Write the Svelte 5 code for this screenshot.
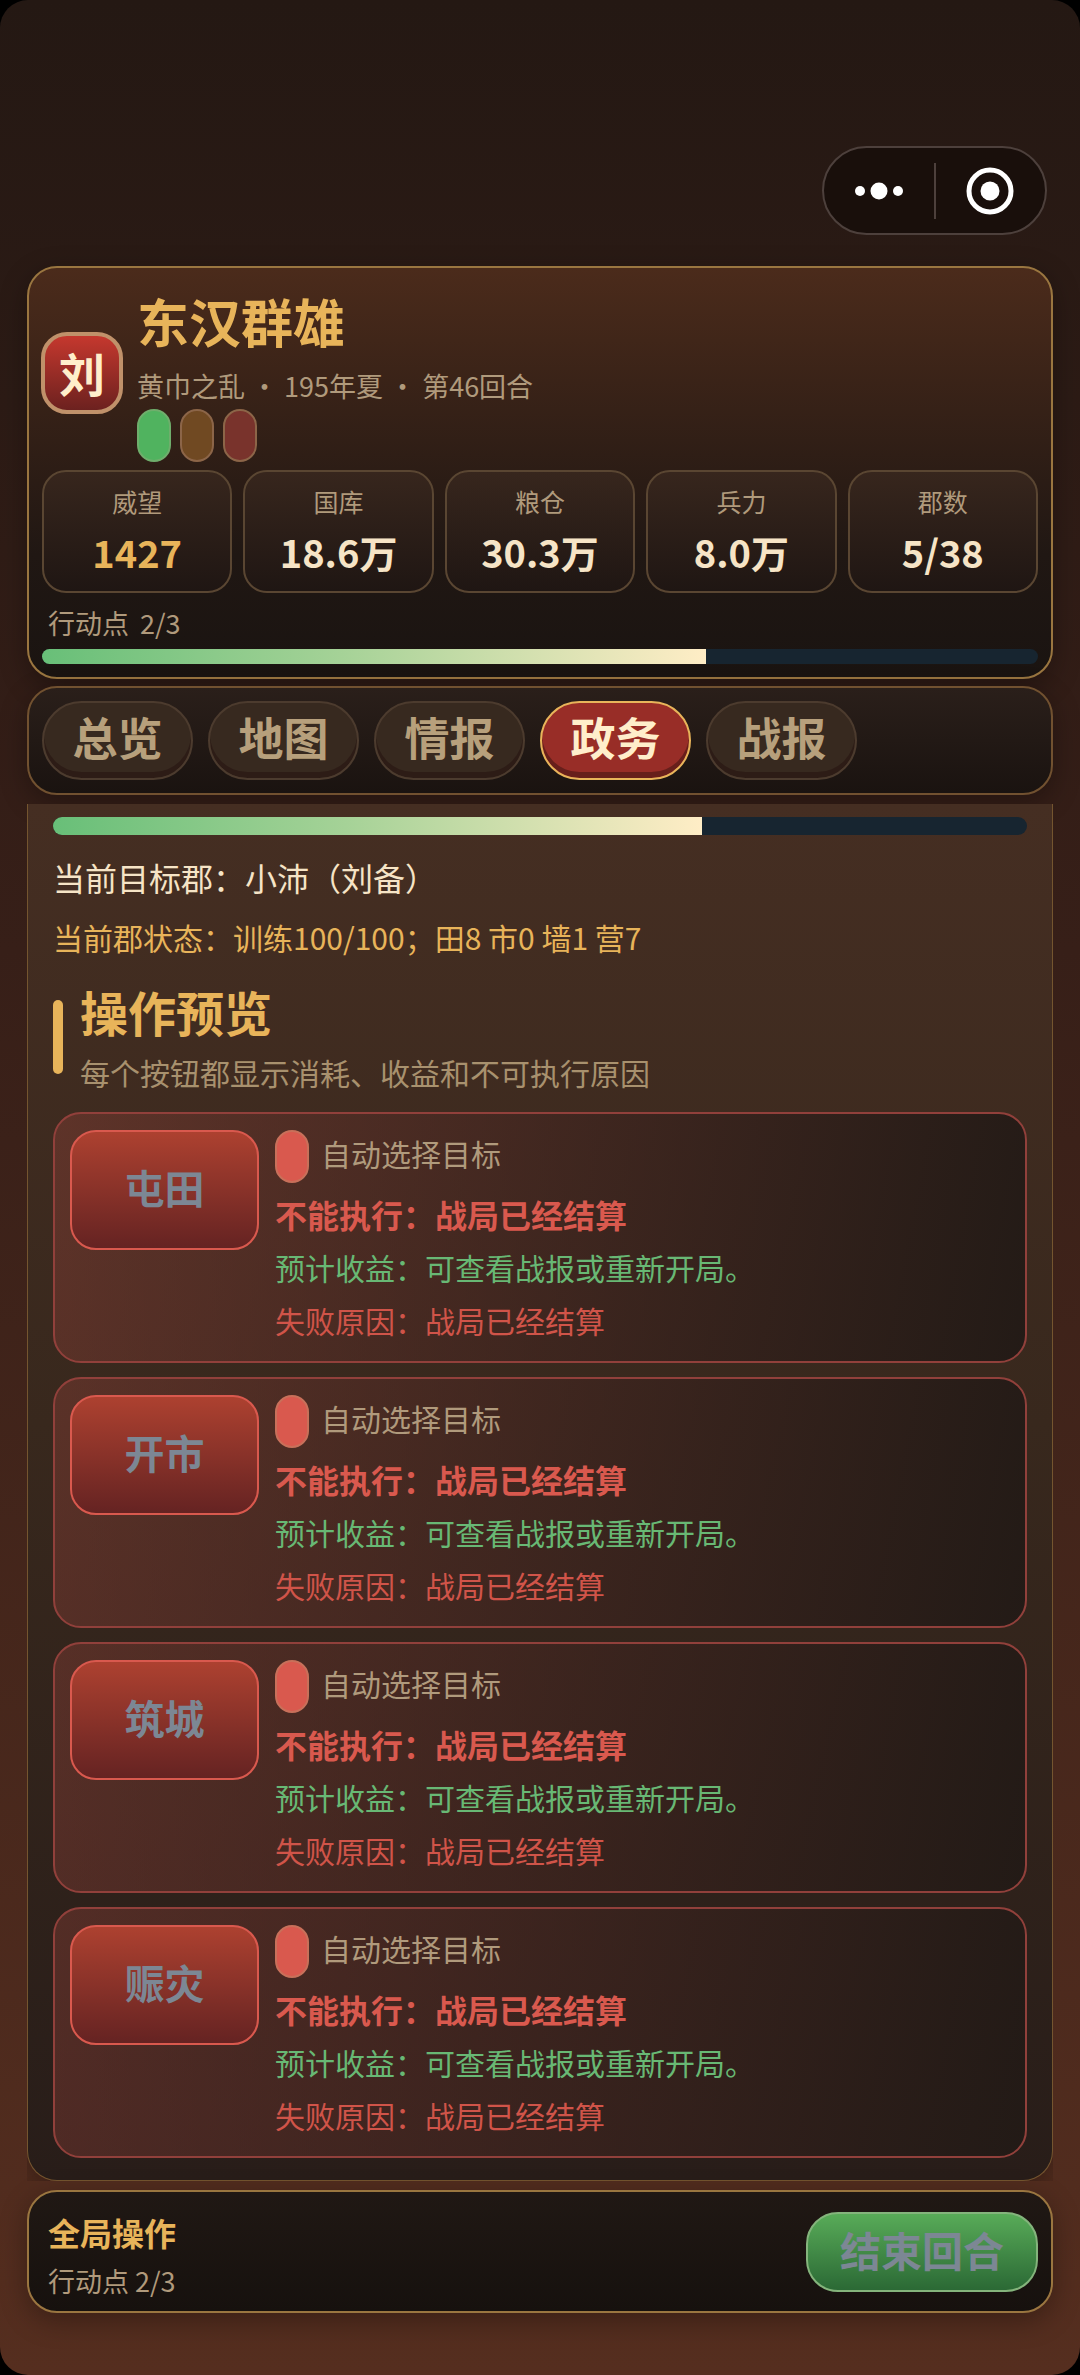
<script>
  const stats = [
    { label: "威望", value: "1427", highlight: true },
    { label: "国库", value: "18.6万" },
    { label: "粮仓", value: "30.3万" },
    { label: "兵力", value: "8.0万" },
    { label: "郡数", value: "5/38" },
  ];

  const tabs = ["总览", "地图", "情报", "政务", "战报"];
  let activeTab = "政务";

  const points = { left: 2, max: 3 };
  $: percent = (points.left / points.max) * 100;

  const blocked = "战局已经结算";
  const actions = ["屯田", "开市", "筑城", "赈灾"].map((name) => ({
    name,
    target: "自动选择目标",
    gain: "可查看战报或重新开局。",
    reason: blocked,
  }));
</script>

<div class="page">
  <div class="topbar">
    <div class="capsule">
      <button aria-label="更多">
        <svg width="52" height="52" viewBox="0 0 52 52" fill="#fff">
          <circle cx="7" cy="26" r="5" />
          <circle cx="26" cy="26" r="8.5" />
          <circle cx="45" cy="26" r="5" />
        </svg>
      </button>
      <span class="split"></span>
      <button aria-label="关闭">
        <svg width="52" height="52" viewBox="0 0 52 52">
          <circle cx="26" cy="26" r="21" fill="none" stroke="#fff" stroke-width="5" />
          <circle cx="26" cy="26" r="9.5" fill="#fff" />
        </svg>
      </button>
    </div>
  </div>

  <header class="box status">
    <div class="identity">
      <div class="avatar">刘</div>
      <div class="who">
        <h1>东汉群雄</h1>
        <p class="small">黄巾之乱 ・ 195年夏 ・ 第46回合</p>
        <div class="lights">
          <span class="pill green"></span>
          <span class="pill amber"></span>
          <span class="pill red"></span>
        </div>
      </div>
    </div>

    <div class="stats">
      {#each stats as stat}
        <div class="stat">
          <span class="stat-label">{stat.label}</span>
          <strong class:highlight={stat.highlight}>{stat.value}</strong>
        </div>
      {/each}
    </div>

    <p class="small points">
      <span>行动点</span>
      <span>{points.left}/{points.max}</span>
    </p>
    <div class="bar"><div class="fill" style="width: {percent}%"></div></div>
  </header>

  <nav class="box tabs">
    {#each tabs as tab}
      <button class:active={tab === activeTab} on:click={() => (activeTab = tab)}>
        {tab}
      </button>
    {/each}
  </nav>

  <div class="scroller">
    <main class="panel">
      <div class="bar thick"><div class="fill" style="width: {percent}%"></div></div>
      <p class="goal">当前目标郡：小沛（刘备）</p>
      <p class="state">当前郡状态：训练100/100；田8 市0 墙1 营7</p>

      <div class="section">
        <span class="mark"></span>
        <div>
          <h2>操作预览</h2>
          <p>每个按钮都显示消耗、收益和不可执行原因</p>
        </div>
      </div>

      <div class="actions">
        {#each actions as action}
          <article class="action">
            <button disabled>{action.name}</button>
            <div class="detail">
              <div class="target">
                <span class="pill bad"></span>
                <span>{action.target}</span>
              </div>
              <p class="blocked">不能执行：{action.reason}</p>
              <p class="gain">预计收益：{action.gain}</p>
              <p class="reason">失败原因：{action.reason}</p>
            </div>
          </article>
        {/each}
      </div>
    </main>
  </div>

  <footer class="box footer">
    <div>
      <p class="footer-title">全局操作</p>
      <p class="small">行动点 {points.left}/{points.max}</p>
    </div>
    <button disabled>结束回合</button>
  </footer>
</div>

<style>
  :global(body) {
    margin: 0;
    background: #000;
  }

  .page {
    box-sizing: border-box;
    min-height: 100vh;
    padding: 0 27px 60px;

    background: linear-gradient(180deg, #241813 0%, #371f18 40%, #552e1f 100%);
    border-radius: 28px;

    color: #f6e4c6;
    font-family: "Noto Sans CJK SC", sans-serif;
    font-size: 30px;
  }

  h1,
  h2,
  p {
    margin: 0;
  }

  button {
    box-sizing: border-box;
    padding: 0;
    font-family: inherit;
    font-weight: 700;
  }

  .topbar {
    display: flex;
    justify-content: flex-end;
    padding: 146px 6px 31px;
  }

  .capsule {
    box-sizing: border-box;
    display: flex;
    align-items: center;
    width: 225px;
    height: 89px;

    background: #190f0b;
    border: 2px solid #4d403c;
    border-radius: 45px;
  }

  .capsule button {
    display: flex;
    flex: 1;
    justify-content: center;

    background: none;
    border: 0;
  }

  .split {
    width: 2px;
    height: 56px;
    background: #4d403c;
  }

  .box {
    box-sizing: border-box;
    border: 2px solid #9a7640;
    border-radius: 30px;
    box-shadow: 0 8px 28px rgba(0, 0, 0, 0.3);
  }

  .small {
    color: #b09a7c;
    font-size: 27px;
    line-height: 40px;
  }

  .status {
    padding: 15px 13px 13px;
    background: linear-gradient(180deg, #4b2b1b 0%, #201713 70%, #1a1411 100%);
  }

  .identity {
    display: flex;
    align-items: center;
    gap: 14px;
  }

  .avatar {
    box-sizing: border-box;
    width: 82px;
    height: 82px;
    margin-left: -1px;

    background: linear-gradient(180deg, #c5382e 0%, #6c211f 100%);
    border: 4px solid #c0916a;
    border-radius: 26px;

    color: #ffeecb;
    font-size: 46px;
    font-weight: 700;
    line-height: 72px;
    text-align: center;
  }

  h1 {
    color: #e8b45a;
    font-size: 52px;
    line-height: 76px;
  }

  .who .small {
    padding: 7px 0 3px;
  }

  .lights {
    display: flex;
    gap: 9px;
  }

  .pill {
    box-sizing: border-box;
    flex: none;
    width: 34px;
    height: 53px;
    border: 2px solid #8c6548;
    border-radius: 17px;
  }

  .green {
    background: #50b35f;
    border-color: #6fae6c;
  }

  .amber {
    background: #704922;
  }

  .red {
    background: #79332c;
  }

  .bad {
    background: #d9594e;
    border-color: #c8705a;
  }

  .stats {
    display: grid;
    grid-template-columns: repeat(5, 1fr);
    gap: 11px;
    margin-top: 8px;
  }

  .stat {
    display: flex;
    flex-direction: column;
    align-items: center;
    padding: 10px 0 8px;

    background: linear-gradient(180deg, #37261d 0%, #1f1613 100%);
    border: 2px solid #5a4632;
    border-radius: 24px;
  }

  .stat-label {
    color: #b09a7c;
    font-size: 25px;
    line-height: 38px;
  }

  .stat strong {
    font-size: 38px;
    line-height: 63px;
  }

  .stat .highlight {
    color: #e8b45a;
  }

  .points {
    display: flex;
    gap: 11px;
    padding: 10px 6px 6px;
  }

  .bar {
    height: 15px;
    overflow: hidden;
    background: #172530;
    border-radius: 9px;
  }

  .thick {
    height: 18px;
  }

  .fill {
    height: 100%;
    background: linear-gradient(90deg, #68bf78 0%, #a5d297 45%, #ffedc6 100%);
  }

  .tabs {
    display: flex;
    gap: 15px;
    margin-top: 7px;
    padding: 13px;

    background: linear-gradient(180deg, #2a1f1a 0%, #1a1310 100%);
    border-color: #715130;
  }

  .tabs button {
    width: 151px;
    height: 79px;
    padding-bottom: 8px;

    background: #37291f;
    border: 2px solid #4c3b2e;
    border-radius: 40px;
    box-shadow: inset 0 -6px 0 rgba(30, 10, 10, 0.4);

    color: #b7a07c;
    font-size: 45px;
    line-height: 66px;
  }

  .tabs .active {
    background: #982d27;
    border-color: #e8b45a;
    color: #ffeecb;
  }

  .scroller {
    margin-top: 9px;
    overflow: hidden;
  }

  .panel {
    padding: 13px 25px 22px;

    background: linear-gradient(180deg, #452e22 0%, #38281d 45%, #281d19 100%);
    border: 1px solid #74552f;
    border-top: 0;
    border-radius: 0 0 30px 30px;
    box-shadow: 0 8px 28px rgba(0, 0, 0, 0.3);
  }

  .goal {
    margin-top: 18px;
    font-size: 32px;
    line-height: 48px;
  }

  .state {
    margin-top: 12px;
    color: #e8b45a;
    line-height: 48px;
  }

  .section {
    display: flex;
    align-items: center;
    gap: 17px;
    margin-top: 15px;
  }

  .mark {
    width: 10px;
    height: 74px;
    background: #e8b45a;
    border-radius: 5px;
  }

  .section h2 {
    color: #e8b45a;
    font-size: 48px;
    line-height: 70px;
  }

  .section p {
    color: #a8916e;
    line-height: 52px;
  }

  .actions {
    display: flex;
    flex-direction: column;
    gap: 14px;
    margin-top: 14px;
  }

  .action {
    display: flex;
    align-items: flex-start;
    gap: 16px;
    padding: 16px 15px 17px;

    background: linear-gradient(
      98deg,
      rgba(150, 66, 58, 0.36) 0%,
      rgba(34, 26, 22, 0.95) 100%
    );
    border: 2px solid #91403b;
    border-radius: 28px;
  }

  .action button {
    flex: none;
    width: 189px;
    height: 120px;
    padding-bottom: 7px;

    background: linear-gradient(180deg, #ad4130 0%, #652322 100%);
    border: 2px solid #d9594e;
    border-radius: 26px;

    color: #7c8794;
    font-size: 40px;
  }

  .detail {
    display: flex;
    flex-direction: column;
    gap: 5px;
  }

  .target {
    display: flex;
    gap: 12px;
    padding-bottom: 2px;
    color: #b09a7c;
    line-height: 46px;
  }

  .detail p {
    line-height: 48px;
  }

  .detail .blocked {
    color: #d9594e;
    font-size: 32px;
    font-weight: 700;
  }

  .gain {
    color: #68b874;
  }

  .reason {
    color: #d05449;
  }

  .footer {
    display: flex;
    align-items: center;
    justify-content: space-between;
    margin-top: 9px;
    padding: 11px 13px 10px 19px;

    background: linear-gradient(180deg, #201814 0%, #16110e 100%);
  }

  .footer-title {
    color: #e8b45a;
    font-size: 32px;
    font-weight: 700;
    line-height: 58px;
  }

  .footer button {
    width: 232px;
    height: 80px;
    padding-bottom: 8px;

    background: linear-gradient(180deg, #58ab58 0%, #2b6935 100%);
    border: 2px solid #84b47c;
    border-radius: 32px;

    color: #7c8794;
    font-size: 41px;
    line-height: 70px;
  }
</style>
